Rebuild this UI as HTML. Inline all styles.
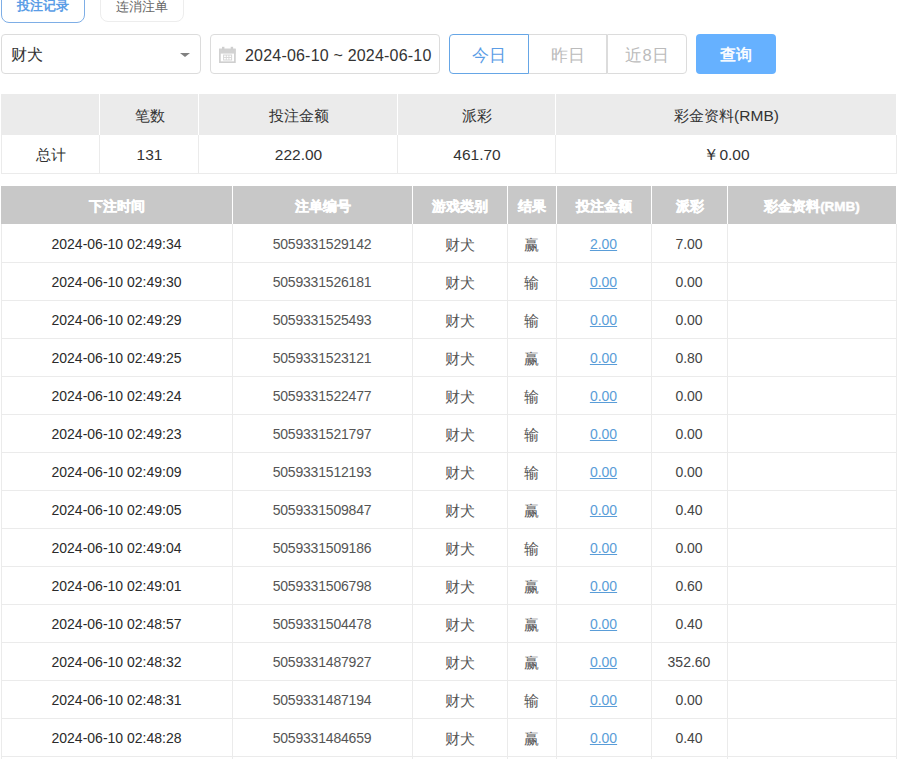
<!DOCTYPE html>
<html><head><meta charset="utf-8">
<style>
html,body{margin:0;padding:0;background:#fff;width:904px;height:759px;overflow:hidden;position:relative;font-family:"Liberation Sans",sans-serif;}
div{box-sizing:border-box;}
.abs{position:absolute;}
.tab{position:absolute;border-radius:8px;}
.tab span{position:absolute;left:0;right:0;text-align:center;top:-4px;line-height:16px;font-size:13.5px;}
.t1{left:1px;top:-12px;width:84px;height:35px;border:1px solid #7eaee6;color:#5b9de6;font-weight:bold;}
.t1 span{top:9px;font-size:13px}
.t2{left:100px;top:-12px;width:84px;height:34px;border:1px solid #ededed;color:#666;}
.t2 span{top:10px;font-size:13px}
.inp{position:absolute;top:34px;height:40px;border:1px solid #dcdcdc;border-radius:4px;}
.sel{left:1px;width:200px;}
.sel span{position:absolute;left:9px;top:0;line-height:39px;font-size:16px;color:#333;}
.arrow{position:absolute;left:180px;top:53px;width:0;height:0;border-left:5.8px solid transparent;border-right:5.8px solid transparent;border-top:4.6px solid #808080;}
.date{left:210px;width:230px;}
.date span{position:absolute;left:34px;top:2px;line-height:38px;font-size:16px;color:#333;white-space:nowrap;letter-spacing:0.2px;}
.bg{position:absolute;top:34px;height:40px;width:79px;border:1px solid #dcdcdc;text-align:center;line-height:40px;font-size:16.5px;color:#bbb;}
.b1{left:449px;border-color:#66a6e6;color:#5b9de6;border-radius:4px 0 0 4px;z-index:2;width:80px;}
.b2{left:528px;}
.b3{left:607px;border-radius:0 4px 4px 0;width:80px;}
.q{position:absolute;left:696px;top:34px;width:80px;height:40px;background:#66b1ff;border-radius:4px;color:#fff;text-align:center;line-height:41px;font-size:16px;font-weight:normal;-webkit-text-stroke:0.5px #fff;}
.sh,.sc,.dh i,.dc{position:absolute;text-align:center;line-height:20px;white-space:nowrap;}
.sh{font-size:15.5px;color:#333;margin-top:2px;margin-left:1px}
.sc{font-size:15.5px;color:#333;margin-top:1px;margin-left:1px}
.zs{font-size:15px;}
.dh{position:absolute;background:#c8c8c8;}
.dh i{font-style:normal;left:0;right:0;top:11px;font-size:13.5px;color:#fff;font-weight:bold;-webkit-text-stroke:0.45px #fff;}
.dc{font-size:14px;color:#333;margin-top:1px}
.zd{font-size:14.5px;position:relative;top:0.5px}
.hl{position:absolute;left:1px;width:896px;height:1px;background:#ebebeb;}
.vl{position:absolute;width:1px;background:#ebebeb;}
.lnk{color:#5a9dd8;text-decoration:underline;}

.c0{color:#2a2a2a}
.c1{color:#555;letter-spacing:-0.2px}
.c2{color:#555}
.c3{color:#555}
.c5{color:#444}

</style></head><body>
<div class="tab t1"><span>投注记录</span></div>
<div class="tab t2"><span>连消注单</span></div>
<div class="inp sel"><span>财犬</span></div>
<div class="arrow"></div>
<div class="inp date"><span>2024-06-10 ~ 2024-06-10</span></div>
<svg class="abs" style="left:219px;top:46px" width="17" height="17" viewBox="0 0 17 17">
<rect x="0.9" y="3.4" width="15" height="12.8" fill="none" stroke="#cfcfcf" stroke-width="1.7"/>
<rect x="0.5" y="3" width="16" height="4.6" fill="#d2d2d2"/>
<rect x="3" y="0.8" width="2.4" height="3.4" fill="#cfcfcf"/><rect x="11.7" y="0.8" width="2.4" height="3.4" fill="#cfcfcf"/>
<rect x="4.6" y="9" width="8" height="5" fill="none" stroke="#d6d6d6" stroke-width="1"/>
<path d="M4.6 11.5h8M7.3 9v5M9.9 9v5" stroke="#d6d6d6" stroke-width="0.9"/>
</svg>
<div class="bg b1">今日</div>
<div class="bg b2">昨日</div>
<div class="bg b3">近8日</div>
<div class="q">查询</div>
<div class="abs" style="left:1px;top:94px;width:895px;height:41px;background:#ebebeb"></div>
<div class="sh" style="left:1px;top:104px;width:98px"></div>
<div class="sc" style="left:1px;top:144px;width:98px"><span class="zs">总计</span></div>
<div class="abs" style="left:99px;top:94px;width:1px;height:41px;background:#fff"></div>
<div class="sh" style="left:99px;top:104px;width:99px"><span class="zs">笔数</span></div>
<div class="sc" style="left:99px;top:144px;width:99px">131</div>
<div class="abs" style="left:198px;top:94px;width:1px;height:41px;background:#fff"></div>
<div class="sh" style="left:198px;top:104px;width:199px"><span class="zs">投注金额</span></div>
<div class="sc" style="left:198px;top:144px;width:199px">222.00</div>
<div class="abs" style="left:397px;top:94px;width:1px;height:41px;background:#fff"></div>
<div class="sh" style="left:397px;top:104px;width:158px"><span class="zs">派彩</span></div>
<div class="sc" style="left:397px;top:144px;width:158px">461.70</div>
<div class="abs" style="left:555px;top:94px;width:1px;height:41px;background:#fff"></div>
<div class="sh" style="left:555px;top:104px;width:341px"><span class="zs">彩金资料</span>(RMB)</div>
<div class="sc" style="left:555px;top:144px;width:341px">￥0.00</div>
<div class="vl" style="left:1px;top:135px;height:38px"></div>
<div class="vl" style="left:99px;top:135px;height:38px"></div>
<div class="vl" style="left:198px;top:135px;height:38px"></div>
<div class="vl" style="left:397px;top:135px;height:38px"></div>
<div class="vl" style="left:555px;top:135px;height:38px"></div>
<div class="vl" style="left:896px;top:135px;height:38px"></div>
<div class="hl" style="top:173px"></div>
<div class="dh" style="left:1px;top:186px;width:231px;height:38px"><i>下注时间</i></div>
<div class="dh" style="left:233px;top:186px;width:179px;height:38px"><i>注单编号</i></div>
<div class="dh" style="left:413px;top:186px;width:94px;height:38px"><i>游戏类别</i></div>
<div class="dh" style="left:508px;top:186px;width:48px;height:38px"><i>结果</i></div>
<div class="dh" style="left:557px;top:186px;width:94px;height:38px"><i>投注金额</i></div>
<div class="dh" style="left:652px;top:186px;width:75px;height:38px"><i>派彩</i></div>
<div class="dh" style="left:728px;top:186px;width:168px;height:38px"><i>彩金资料(RMB)</i></div>
<div class="dc c0" style="left:1px;top:233px;width:231px">2024-06-10 02:49:34</div>
<div class="dc c1" style="left:232px;top:233px;width:180px">5059331529142</div>
<div class="dc c2" style="left:412px;top:233px;width:95px"><span class="zd">财犬</span></div>
<div class="dc c3" style="left:507px;top:233px;width:49px"><span class="zd">赢</span></div>
<div class="dc c4" style="left:556px;top:233px;width:95px"><span class="lnk">2.00</span></div>
<div class="dc c5" style="left:651px;top:233px;width:76px">7.00</div>
<div class="dc c6" style="left:727px;top:233px;width:169px"></div>
<div class="hl" style="top:262px"></div>
<div class="dc c0" style="left:1px;top:271px;width:231px">2024-06-10 02:49:30</div>
<div class="dc c1" style="left:232px;top:271px;width:180px">5059331526181</div>
<div class="dc c2" style="left:412px;top:271px;width:95px"><span class="zd">财犬</span></div>
<div class="dc c3" style="left:507px;top:271px;width:49px"><span class="zd">输</span></div>
<div class="dc c4" style="left:556px;top:271px;width:95px"><span class="lnk">0.00</span></div>
<div class="dc c5" style="left:651px;top:271px;width:76px">0.00</div>
<div class="dc c6" style="left:727px;top:271px;width:169px"></div>
<div class="hl" style="top:300px"></div>
<div class="dc c0" style="left:1px;top:309px;width:231px">2024-06-10 02:49:29</div>
<div class="dc c1" style="left:232px;top:309px;width:180px">5059331525493</div>
<div class="dc c2" style="left:412px;top:309px;width:95px"><span class="zd">财犬</span></div>
<div class="dc c3" style="left:507px;top:309px;width:49px"><span class="zd">输</span></div>
<div class="dc c4" style="left:556px;top:309px;width:95px"><span class="lnk">0.00</span></div>
<div class="dc c5" style="left:651px;top:309px;width:76px">0.00</div>
<div class="dc c6" style="left:727px;top:309px;width:169px"></div>
<div class="hl" style="top:338px"></div>
<div class="dc c0" style="left:1px;top:347px;width:231px">2024-06-10 02:49:25</div>
<div class="dc c1" style="left:232px;top:347px;width:180px">5059331523121</div>
<div class="dc c2" style="left:412px;top:347px;width:95px"><span class="zd">财犬</span></div>
<div class="dc c3" style="left:507px;top:347px;width:49px"><span class="zd">赢</span></div>
<div class="dc c4" style="left:556px;top:347px;width:95px"><span class="lnk">0.00</span></div>
<div class="dc c5" style="left:651px;top:347px;width:76px">0.80</div>
<div class="dc c6" style="left:727px;top:347px;width:169px"></div>
<div class="hl" style="top:376px"></div>
<div class="dc c0" style="left:1px;top:385px;width:231px">2024-06-10 02:49:24</div>
<div class="dc c1" style="left:232px;top:385px;width:180px">5059331522477</div>
<div class="dc c2" style="left:412px;top:385px;width:95px"><span class="zd">财犬</span></div>
<div class="dc c3" style="left:507px;top:385px;width:49px"><span class="zd">输</span></div>
<div class="dc c4" style="left:556px;top:385px;width:95px"><span class="lnk">0.00</span></div>
<div class="dc c5" style="left:651px;top:385px;width:76px">0.00</div>
<div class="dc c6" style="left:727px;top:385px;width:169px"></div>
<div class="hl" style="top:414px"></div>
<div class="dc c0" style="left:1px;top:423px;width:231px">2024-06-10 02:49:23</div>
<div class="dc c1" style="left:232px;top:423px;width:180px">5059331521797</div>
<div class="dc c2" style="left:412px;top:423px;width:95px"><span class="zd">财犬</span></div>
<div class="dc c3" style="left:507px;top:423px;width:49px"><span class="zd">输</span></div>
<div class="dc c4" style="left:556px;top:423px;width:95px"><span class="lnk">0.00</span></div>
<div class="dc c5" style="left:651px;top:423px;width:76px">0.00</div>
<div class="dc c6" style="left:727px;top:423px;width:169px"></div>
<div class="hl" style="top:452px"></div>
<div class="dc c0" style="left:1px;top:461px;width:231px">2024-06-10 02:49:09</div>
<div class="dc c1" style="left:232px;top:461px;width:180px">5059331512193</div>
<div class="dc c2" style="left:412px;top:461px;width:95px"><span class="zd">财犬</span></div>
<div class="dc c3" style="left:507px;top:461px;width:49px"><span class="zd">输</span></div>
<div class="dc c4" style="left:556px;top:461px;width:95px"><span class="lnk">0.00</span></div>
<div class="dc c5" style="left:651px;top:461px;width:76px">0.00</div>
<div class="dc c6" style="left:727px;top:461px;width:169px"></div>
<div class="hl" style="top:490px"></div>
<div class="dc c0" style="left:1px;top:499px;width:231px">2024-06-10 02:49:05</div>
<div class="dc c1" style="left:232px;top:499px;width:180px">5059331509847</div>
<div class="dc c2" style="left:412px;top:499px;width:95px"><span class="zd">财犬</span></div>
<div class="dc c3" style="left:507px;top:499px;width:49px"><span class="zd">赢</span></div>
<div class="dc c4" style="left:556px;top:499px;width:95px"><span class="lnk">0.00</span></div>
<div class="dc c5" style="left:651px;top:499px;width:76px">0.40</div>
<div class="dc c6" style="left:727px;top:499px;width:169px"></div>
<div class="hl" style="top:528px"></div>
<div class="dc c0" style="left:1px;top:537px;width:231px">2024-06-10 02:49:04</div>
<div class="dc c1" style="left:232px;top:537px;width:180px">5059331509186</div>
<div class="dc c2" style="left:412px;top:537px;width:95px"><span class="zd">财犬</span></div>
<div class="dc c3" style="left:507px;top:537px;width:49px"><span class="zd">输</span></div>
<div class="dc c4" style="left:556px;top:537px;width:95px"><span class="lnk">0.00</span></div>
<div class="dc c5" style="left:651px;top:537px;width:76px">0.00</div>
<div class="dc c6" style="left:727px;top:537px;width:169px"></div>
<div class="hl" style="top:566px"></div>
<div class="dc c0" style="left:1px;top:575px;width:231px">2024-06-10 02:49:01</div>
<div class="dc c1" style="left:232px;top:575px;width:180px">5059331506798</div>
<div class="dc c2" style="left:412px;top:575px;width:95px"><span class="zd">财犬</span></div>
<div class="dc c3" style="left:507px;top:575px;width:49px"><span class="zd">赢</span></div>
<div class="dc c4" style="left:556px;top:575px;width:95px"><span class="lnk">0.00</span></div>
<div class="dc c5" style="left:651px;top:575px;width:76px">0.60</div>
<div class="dc c6" style="left:727px;top:575px;width:169px"></div>
<div class="hl" style="top:604px"></div>
<div class="dc c0" style="left:1px;top:613px;width:231px">2024-06-10 02:48:57</div>
<div class="dc c1" style="left:232px;top:613px;width:180px">5059331504478</div>
<div class="dc c2" style="left:412px;top:613px;width:95px"><span class="zd">财犬</span></div>
<div class="dc c3" style="left:507px;top:613px;width:49px"><span class="zd">赢</span></div>
<div class="dc c4" style="left:556px;top:613px;width:95px"><span class="lnk">0.00</span></div>
<div class="dc c5" style="left:651px;top:613px;width:76px">0.40</div>
<div class="dc c6" style="left:727px;top:613px;width:169px"></div>
<div class="hl" style="top:642px"></div>
<div class="dc c0" style="left:1px;top:651px;width:231px">2024-06-10 02:48:32</div>
<div class="dc c1" style="left:232px;top:651px;width:180px">5059331487927</div>
<div class="dc c2" style="left:412px;top:651px;width:95px"><span class="zd">财犬</span></div>
<div class="dc c3" style="left:507px;top:651px;width:49px"><span class="zd">赢</span></div>
<div class="dc c4" style="left:556px;top:651px;width:95px"><span class="lnk">0.00</span></div>
<div class="dc c5" style="left:651px;top:651px;width:76px">352.60</div>
<div class="dc c6" style="left:727px;top:651px;width:169px"></div>
<div class="hl" style="top:680px"></div>
<div class="dc c0" style="left:1px;top:689px;width:231px">2024-06-10 02:48:31</div>
<div class="dc c1" style="left:232px;top:689px;width:180px">5059331487194</div>
<div class="dc c2" style="left:412px;top:689px;width:95px"><span class="zd">财犬</span></div>
<div class="dc c3" style="left:507px;top:689px;width:49px"><span class="zd">输</span></div>
<div class="dc c4" style="left:556px;top:689px;width:95px"><span class="lnk">0.00</span></div>
<div class="dc c5" style="left:651px;top:689px;width:76px">0.00</div>
<div class="dc c6" style="left:727px;top:689px;width:169px"></div>
<div class="hl" style="top:718px"></div>
<div class="dc c0" style="left:1px;top:727px;width:231px">2024-06-10 02:48:28</div>
<div class="dc c1" style="left:232px;top:727px;width:180px">5059331484659</div>
<div class="dc c2" style="left:412px;top:727px;width:95px"><span class="zd">财犬</span></div>
<div class="dc c3" style="left:507px;top:727px;width:49px"><span class="zd">赢</span></div>
<div class="dc c4" style="left:556px;top:727px;width:95px"><span class="lnk">0.00</span></div>
<div class="dc c5" style="left:651px;top:727px;width:76px">0.40</div>
<div class="dc c6" style="left:727px;top:727px;width:169px"></div>
<div class="hl" style="top:756px"></div>
<div class="dc c0" style="left:1px;top:765px;width:231px">2024-06-10 02:48:26</div>
<div class="dc c1" style="left:232px;top:765px;width:180px">5059331483121</div>
<div class="dc c2" style="left:412px;top:765px;width:95px"><span class="zd">财犬</span></div>
<div class="dc c3" style="left:507px;top:765px;width:49px"><span class="zd">输</span></div>
<div class="dc c4" style="left:556px;top:765px;width:95px"><span class="lnk">0.00</span></div>
<div class="dc c5" style="left:651px;top:765px;width:76px">0.00</div>
<div class="dc c6" style="left:727px;top:765px;width:169px"></div>
<div class="hl" style="top:794px"></div>
<div class="vl" style="left:1px;top:224px;height:535px"></div>
<div class="vl" style="left:232px;top:224px;height:535px"></div>
<div class="vl" style="left:412px;top:224px;height:535px"></div>
<div class="vl" style="left:507px;top:224px;height:535px"></div>
<div class="vl" style="left:556px;top:224px;height:535px"></div>
<div class="vl" style="left:651px;top:224px;height:535px"></div>
<div class="vl" style="left:727px;top:224px;height:535px"></div>
<div class="vl" style="left:896px;top:224px;height:535px"></div>
</body></html>
